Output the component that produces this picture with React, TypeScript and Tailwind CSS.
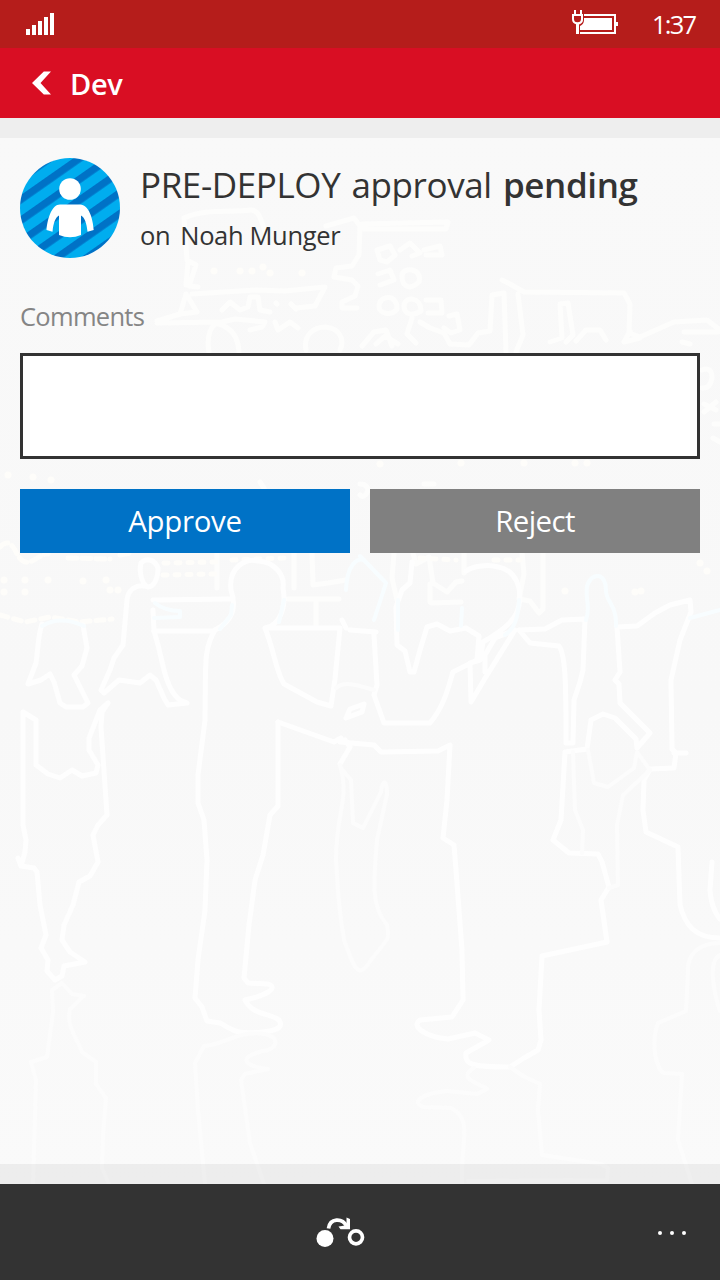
import type { ReactNode } from 'react';

const mainOutlines = [
  // left-hand bystander
  'M42 624 C38 635 38 650 36 663 L28 684 L41 680 L50 674 L54 682 L60 703 L66 707 L83 707 L88 703 L74 675 L82 666 L87 648 L83 625',
  'M18 858 L21 866 L25 852 L26 840 L23 825 L23 712 L36 720 L36 765 L48 774 L60 778 L72 770 L82 776 L96 773 L98 765 L89 750 L89 738 L100 710 L108 703 L102 712 L101 727 L107 815 L98 825 L93 835 L98 862 L90 876 L79 882 L73 905 L64 925 L62 940 L70 952 L85 962 L64 966 L62 976 L55 980 L47 971 L48 960 L41 948 L46 935 L40 905 L37 872 L34 868 L21 866',
  // walker behind
  'M148 587 C141 584 139 570 141 563 C147 557 155 560 158 568 C158 580 153 587 148 587 C136 583 128 590 127 600 L123 645 L114 658 L110 670 L101 690 L104 693 L119 680 L140 683 L150 675 L156 680 L164 698 L168 705 L187 703 L180 700 Q170 693 164 670 L158 645 L154 631 L153 610',
  'M153 600 L231 599 M154 631 L212 631',
  // man on the left of the handshake
  'M278 722 L334 742 L341 738',
  'M215 630 C235 620 236 605 231 590 C228 567 246 558 258 561 C275 562 285 575 283 588 C287 610 278 626 265 628 C274 650 276 672 284 684 L317 702 L331 706 L335 679 L340 628 L270 628',
  'M215 630 C203 650 206 665 205 720 L198 775 L198 803 L204 820 L207 860 L205 910 L198 960 L195 998 L202 1007 L207 1021 L220 1023 C233 1030 235 1035 263 1032 C280 1030 283 1026 279 1020 C270 1013 252 1015 245 1000 C264 996 280 988 268 984 L248 983 L244 978 L249 925 L255 880 L263 855 L270 815 L278 806 L278 722',
  // man on the right of the handshake
  'M342 620 L346 628 M350 630 L376 632 M340 742 L374 745 L381 752 L438 751 L450 745 L447 800 L443 838 L454 845 L456 870 L462 950 L463 1000 L452 1017 L420 1020 C410 1027 427 1037 448 1039 L475 1033 L489 1040 L466 1053 C464 1065 473 1067 510 1067 L524 1058 L538 1050 L541 1040 L539 1010 L542 956 L607 942 L601 900 L609 887 L602 862 L598 854 L569 853 L553 840 L561 820 L565 752 L587 749 L591 720 L603 714 L615 718 L636 739 L637 748 L650 733 L620 703 L619 684 L615 680 L620 672 L617 627 L637 626 L655 613 L670 605 L690 600 L691 612 L680 640 L671 680 L672 749 L676 753 L674 768 L650 769 L644 780 L643 810 L646 832 L678 847 L680 905 C685 925 695 938 720 938',
  'M466 571 C473 566 488 564 498 567 C516 570 522 588 519 605 C517 618 507 628 483 642 L480 660 L470 663 L471 702 L484 680 L515 630 L495 638 L485 655 L485 672 M374 635 L377 685 L374 695 L384 723 L430 723 C446 704 450 680 453 672 L477 660 L479 636 L466 628 L450 631 L437 624 L427 627 L420 650 L414 672 L410 672 L405 651 L397 645 L396 607 L402 590 L410 583 L412 562 M519 630 L530 643 L559 646 C566 655 566 690 566 743 L573 743 L574 700 L580 682 L583 670 L585 619 L562 620 L545 629 L519 630',
  'M364 704 L350 709 L346 718 L362 712 Z M345 740 L350 747 L340 764',
  'M712 862 L710 890 C711 909 720 919 720 919 M674 753 L686 753',
];

const faintOutlines = [
  'M336 688 C345 680 360 686 374 690',
  'M52 990 L62 983 L72 994 L84 996 L70 1009 C66 1025 76 1037 82 1052 L96 1062 L96 1084 L106 1098 L103 1135 L102 1168 L109 1184 M52 990 L53 1012 L47 1057 L31 1062 L36 1080 L33 1184',
  'M265 1034 C237 1030 222 1046 204 1046 L195 1063 L198 1110 L205 1184 M265 1034 C282 1038 276 1050 263 1051 C242 1056 238 1065 268 1069 L245 1074 L241 1080 L250 1143 L264 1184',
  'M474 1068 C454 1079 486 1086 487 1089 L477 1094 L447 1091 C424 1093 409 1102 424 1107 L451 1108 C474 1120 460 1142 462 1184 M510 1067 L523 1076 L540 1084 L538 1110 L542 1155 L601 1164 L608 1168 L607 1180 L468 1181',
  'M720 943 C698 943 687 955 688 972 L686 1011 L658 1023 C650 1045 657 1070 664 1073 L682 1074 L678 1140 L692 1184 M720 955 C706 962 716 1000 720 1011',
  'M340 765 C350 800 336 810 336 860 C338 893 339 910 344 940 C355 970 358 980 371 960 C391 935 389 940 387 925 C370 905 374 880 377 840 L387 794 C387 778 382 780 381 792 L363 828 L353 823 L351 780 L341 768',
  'M588 750 L594 783 L608 787 L634 768 L637 752 L650 770 L623 795 L617 825 L618 885 L609 888 M573 752 L575 810 L583 830 L582 853',
];

const skylineOutlines = [
  'M184 218 C205 208 232 213 250 210 C260 209 262 224 266 235 M184 218 L187 260 L196 265 L189 286 L198 287 M188 262 L186 285 M192 294 L256 290 L285 291 L325 287 L315 306 L296 308 M188 297 L197 312 L180 314 M222 310 L230 302 L240 310 L248 307 L250 297 L258 297 L260 310 L270 312 M276 303 L277 304 M291 304 L296 309',
  'M157 321 L180 314 L186 294 M157 323 L222 322 L235 319 L265 322 L262 327 L250 330 M275 322 L278 330 L290 322 L298 328 M209 352 C206 335 212 322 219 324 Q238 330 239 352 M306 350 C303 335 314 327 325 327 C340 328 345 340 340 350',
  'M326 226 L340 222 L354 218 L360 226 L359 255 L352 266 L336 268 L334 277 L352 280 L358 286 L355 296 L342 302 L342 308 L357 308',
  'M362 224 L448 222 L446 229 L364 229 Z M377 250 L390 246 L395 255 L387 262 L380 260 Z M400 250 L410 243 L420 253 L412 256 M424 250 L440 246 L442 255 L426 255',
  'M378 274 L390 270 L394 280 L380 285 M402 276 C402 266 423 268 419 282 C408 292 402 285 402 276 M379 307 C379 294 398 294 397 309 C391 317 379 313 379 307 M404 306 C404 296 421 296 421 311 C409 318 404 312 404 306 M426 300 L441 300 L442 313 L428 313',
  'M362 346 L374 332 L386 330 L392 346 M376 344 L385 336 L398 344 M412 318 L407 334 L416 343 M420 322 L430 328 L444 333 L450 344 L469 345 L478 333 L490 331 L492 295 L504 293 L506 352 M502 280 L510 284 L524 292 L624 293 L630 304 L629 333 L640 337 L674 322 L707 320 L720 330 M518 294 L523 335 L516 352 M550 342 L562 338 L560 304 L568 303 L573 335 L566 342 M576 341 L586 330 L600 330 L606 340 M630 331 L624 342 L640 338 M684 332 L718 332 M682 342 L690 344',
  'M449 316 L457 314 L460 330 L451 333 L444 328',
  'M394 553 L392 578 L397 600 M464 553 L464 573 M522 553 L524 574 L519 599 L530 601 L539 613 L543 609 L543 553 M413 553 L416 564 L429 557 L433 583 L447 592 L456 582 L462 581 M431 603 L461 602 M430 584 L430 602',
  'M312 553 L313 585 L328 583 L346 580 M217 553 L217 588 M294 553 L294 588 M288 599 L339 599 M316 600 L316 627',
  'M702 370 Q712 366 712 378 Q710 389 702 388 M704 404 L716 410 M716 402 L704 412 M714 424 L720 424 M713 438 L720 442 M260 482 L264 488 M360 484 Q368 484 368 491 Q364 499 360 495 M424 484 L434 484',
];

const tinted = [
  'M360 556 L386 583 L374 620 M398 600 L398 630 M462 608 L461 626 M519 600 C518 618 515 628 505 635 M586 620 C591 606 585 602 587 586 C592 571 606 573 606 590 C605 601 617 604 616 626 M690 618 L720 610',
  'M232 605 L231 615 L220 629 M284 600 L279 622 M346 590 C347 563 358 558 364 560 M42 626 Q60 615 84 626 M155 603 Q165 611 180 611 L180 617 L154 618',
];

const windowDots = [
  [4, 580], [25, 580], [48, 580], [83, 581], [106, 580], [4, 592], [25, 592], [110, 590], [118, 590],
  [214, 271], [240, 271], [252, 271], [263, 267], [270, 273], [302, 273], [8, 475], [33, 477], [51, 480],
  [380, 464], [461, 463], [524, 463], [575, 463], [587, 463], [565, 591], [635, 592], [641, 591], [700, 563], [707, 571],
];

const Backdrop = () => (
  <svg className="pointer-events-none absolute inset-0 h-full w-full" viewBox="0 118 720 1066" fill="none" strokeLinejoin="round" strokeLinecap="round" aria-hidden="true">
    <defs>
      <linearGradient id="haze" x1="0" y1="118" x2="0" y2="1184" gradientUnits="userSpaceOnUse">
        <stop offset="0" stopColor="#f9f9f9" />
        <stop offset="0.55" stopColor="#f8f8f8" />
        <stop offset="1" stopColor="#fafafa" />
      </linearGradient>
    </defs>
    <rect y="118" width="720" height="1066" fill="url(#haze)" />
    <g stroke="#fdfdfc" strokeWidth="5">
      {skylineOutlines.map((d) => <path key={d} d={d} />)}
    </g>
    <g stroke="#fefdfa" strokeWidth="5">
      <path strokeDasharray="9 5" d="M0 547 Q9 537 16 552 T34 560 T48 554 M68 558 L110 559 M120 555 L130 553" />
      <path strokeDasharray="8 6" d="M0 615 L25 622 L50 617 L80 622 L112 619" />
      <path strokeDasharray="4 8" d="M164 563 L216 562 M163 575 L216 574 M232 560 L285 558 M420 558 L456 560 M494 560 L520 560" />
    </g>
    <g fill="#fefdfa">
      {windowDots.map(([x, y]) => <circle key={`${x}-${y}`} cx={x} cy={y} r="3.500" />)}
    </g>
    <g stroke="#fefefe" strokeWidth="5">
      {mainOutlines.map((d) => <path key={d} d={d} />)}
    </g>
    <g stroke="#fcfcfc" strokeWidth="4">
      {faintOutlines.map((d) => <path key={d} d={d} />)}
    </g>
    <g stroke="#f8fdff" strokeWidth="4">
      {tinted.map((d) => <path key={d} d={d} />)}
    </g>
  </svg>
);

const Avatar = () => (
  <svg className="block h-[100px] w-[100px] shrink-0" viewBox="0 0 100 100" aria-hidden="true">
    <defs>
      <clipPath id="disc"><circle cx="50" cy="50" r="50" /></clipPath>
      <pattern id="stripes" width="20" height="17.1" patternUnits="userSpaceOnUse" patternTransform="translate(0 58.5) rotate(-35)">
        <rect width="20" height="17.1" fill="#00adef" />
        <rect width="20" height="7.3" fill="#0072c6" />
      </pattern>
    </defs>
    <g clipPath="url(#disc)">
      <rect width="100" height="100" fill="url(#stripes)" />
    </g>
    <circle cx="50" cy="31" r="10.8" fill="#fff" />
    <path fill="#fff" d="M40 46.5 H60 C69 46.5 73 61 73.7 72 L67.5 73.7 C66.5 65 65 60 61 57.5 V77 Q50 81.5 39 77 V57.5 C35 60 33.5 65 32.5 73.7 L26.5 72 C27.5 60 32 46.5 40 46.5Z" />
  </svg>
);

const ActionButton = ({ className, children }: { className: string; children: ReactNode }) => (
  <button type="button" className={`h-16 flex-1 pt-px text-[29.4px] leading-[63px] text-white ${className}`}>{children}</button>
);

export default function App() {
  return (
    <div className="flex h-[1280px] w-[720px] flex-col overflow-hidden bg-[#f9f9f9] font-['Open_Sans','Noto_Sans',sans-serif] text-[#333333]">
      <div className="flex h-12 shrink-0 items-start bg-[#b51d1b] text-white">
        <svg className="mt-[13px] ml-[26px] h-[22px] w-7" viewBox="0 0 28 22" fill="currentColor" shapeRendering="crispEdges" aria-hidden="true">
          <path d="M0 16h4v6H0zM6 12h4v10H6zM12 8h4v14h-4zM18 4h4v18h-4zM24 0h4v22h-4z" />
        </svg>
        <svg className="mt-[10px] ml-auto h-6 w-[46px]" viewBox="0 0 46 24" fill="currentColor" aria-hidden="true">
          <path d="M2 0h2v4h4V0h2v4h1v6c0 2-1.5 4-4 4.4V24H4V14.2C1.500 13.500 0 12 0 9V4h2zM2 6v3c0 2 1 3.300 3.500 3.300S9 11 9 9V6z" fillRule="evenodd" />
          <path d="M12 4h32v8h2v4h-2v8H8v-2h34V6H12z" />
          <path d="M12 8h28v12H8v-4c2.500-1 4-3 4-6z" />
        </svg>
        <span className="ml-[34px] w-[68px] text-[25.5px] leading-[48px] tracking-[-1.8px] whitespace-nowrap">1:37</span>
      </div>

      <header className="flex h-[70px] shrink-0 items-center bg-[#d90e23] text-white">
        <svg className="ml-8 h-6 w-[19px]" viewBox="0 0 19 24" fill="currentColor" aria-hidden="true">
          <path d="M11.800 0.500H19L8.500 12 19 23.500H11.800L0 12Z" />
        </svg>
        <h1 className="ml-[19px] pt-[2px] text-[29px] leading-[68px] font-[550] tracking-[-0.3px]">Dev</h1>
      </header>

      <main className="relative flex flex-1 flex-col">
        <Backdrop />
        <div className="relative h-5 shrink-0 bg-[#eeeeee]" />
        <div className="relative flex flex-1 flex-col px-5 pt-5">
          <div className="flex gap-5">
            <Avatar />
            <div className="flex flex-col whitespace-nowrap">
              <p className="text-[35px] leading-[54px] tracking-[-0.4px] [word-spacing:2.5px]">
                PRE-DEPLOY approval <span className="font-semibold">pending</span>
              </p>
              <p className="flex gap-[10px] text-[25.5px] leading-[46px] tracking-[-0.35px]"><span>on</span><span>Noah Munger</span></p>
            </div>
          </div>
          <label htmlFor="comments" className="mt-[41px] text-[25.5px] leading-[34px] tracking-[-0.7px] text-[#858585]">Comments</label>
          <textarea id="comments" className="mt-5 h-[106px] resize-none border-[3px] border-[#333333] bg-white p-3 outline-none" />
          <div className="mt-[30px] flex gap-5">
            <ActionButton className="bg-[#0072c6] tracking-[-0.3px]">Approve</ActionButton>
            <ActionButton className="bg-[#808080] tracking-[-0.6px]">Reject</ActionButton>
          </div>
        </div>
        <div className="relative h-5 shrink-0 bg-black/5" />
      </main>

      <footer className="flex h-24 shrink-0 items-start justify-between bg-[#333333] text-white">
        <svg className="mt-[33px] ml-[316px] h-[30px] w-[49px]" viewBox="0 0 49 30" fill="none" stroke="currentColor" aria-hidden="true">
          <circle cx="9" cy="21.500" r="8.500" fill="currentColor" stroke="none" />
          <circle cx="40" cy="20.300" r="6.500" strokeWidth="3.700" />
          <path d="M12.500 11.500C14 1 26 0.500 31 9.500" strokeWidth="3.700" />
          <path d="M22.500 9.500L24.500 12.200H34V2L30.500 0.500V8L26 9Z" fill="currentColor" stroke="none" />
        </svg>
        <svg className="mt-[47px] mr-[34px] h-1 w-7" viewBox="0 0 28 4" fill="currentColor" aria-hidden="true">
          <circle cx="2" cy="2" r="2" /><circle cx="14" cy="2" r="2" /><circle cx="26" cy="2" r="2" />
        </svg>
      </footer>
    </div>
  );
}
